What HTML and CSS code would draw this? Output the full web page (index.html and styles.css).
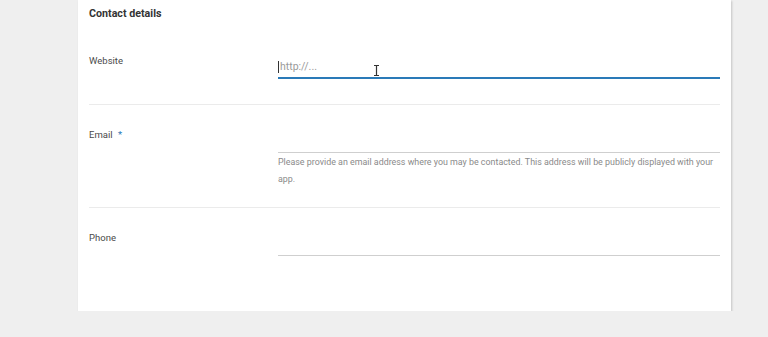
FILE: index.html
```html
<!DOCTYPE html>
<html lang="en">
<head>
  <meta charset="UTF-8">
  <title>Contact details</title>
  <link rel="stylesheet" href="styles.css">
</head>
<body>

<!-- Contact details card -->
<section class="card">
  <h2>Contact details</h2>

  <div class="row">
    <label class="label" for="website">Website</label>
    <div class="field">
      <div class="input focused">
        <span class="caret"></span>
        <input id="website" type="text" placeholder="http://...">
        <!-- mouse pointer over the field -->
        <svg class="pointer" width="7" height="11" viewBox="0 0 7 11">
          <path d="M1 0.5h5M1 10.5h5M3.5 0.5v10" stroke="#333" stroke-width="1.2" fill="none"/>
        </svg>
      </div>
    </div>
  </div>

  <div class="row">
    <label class="label" for="email">Email <span class="req">*</span></label>
    <div class="field">
      <div class="input">
        <input id="email" type="text">
      </div>
      <p class="help">Please provide an email address where you may be contacted. This address will be publicly displayed with your app.</p>
    </div>
  </div>

  <div class="row last">
    <label class="label" for="phone">Phone</label>
    <div class="field">
      <div class="input">
        <input id="phone" type="text">
      </div>
    </div>
  </div>
</section>

</body>
</html>
```

FILE: styles.css
```css
body {
  font-family: Roboto, 'Liberation Sans', Arial, sans-serif;
  margin: 0;
  padding: 0;
  background-color: #efefef;
  color: #444;
}

.card {
  width: 631px;
  margin-left: 78px;
  padding: 7px 11px 30px;
  background-color: white;
  box-shadow: 1px 1px 2px rgba(0, 0, 0, 0.18);
}

.card h2 {
  margin: 0 0 10px;
  font-size: 10.7px;
  line-height: 14px;
  font-weight: bold;
  color: #333;
}

.row {
  display: grid;
  grid-template-columns: 189px 1fr;
  padding: 22px 0 20px;
  border-bottom: 1px solid #ebebeb;
}

.row.last {
  border-bottom: none;
}

.label {
  padding-top: 1px;
  font-size: 9.5px;
  line-height: 14px;
  color: #4a4a4a;
}

.req {
  color: #2a7ab8;
  margin-left: 3px;
}

.field {
  display: flex;
  flex-direction: column;
}

.input {
  position: relative;
  display: flex;
  align-items: center;
  height: 20px;
  margin: 5px 0;
  border-bottom: 1px solid #cfcfcf;
}

.input.focused {
  border-bottom: 2px solid #2a7ab8;
  height: 19px;
}

.input input {
  flex: 1;
  border: none;
  padding: 0 0 2px 1px;
  font-family: inherit;
  font-size: 10.5px;
  color: #333;
  background: transparent;
}

.input input::placeholder {
  color: #9a9a9a;
}

.input input:focus {
  outline: none;
}

.caret {
  width: 1px;
  height: 12px;
  margin-bottom: 2px;
  background-color: #333;
}

.pointer {
  position: absolute;
  left: 95px;
  top: 7px;
}

.help {
  margin: -4px 0 -1px;
  font-size: 8.9px;
  line-height: 17px;
  color: #8a8a8a;
}
```
